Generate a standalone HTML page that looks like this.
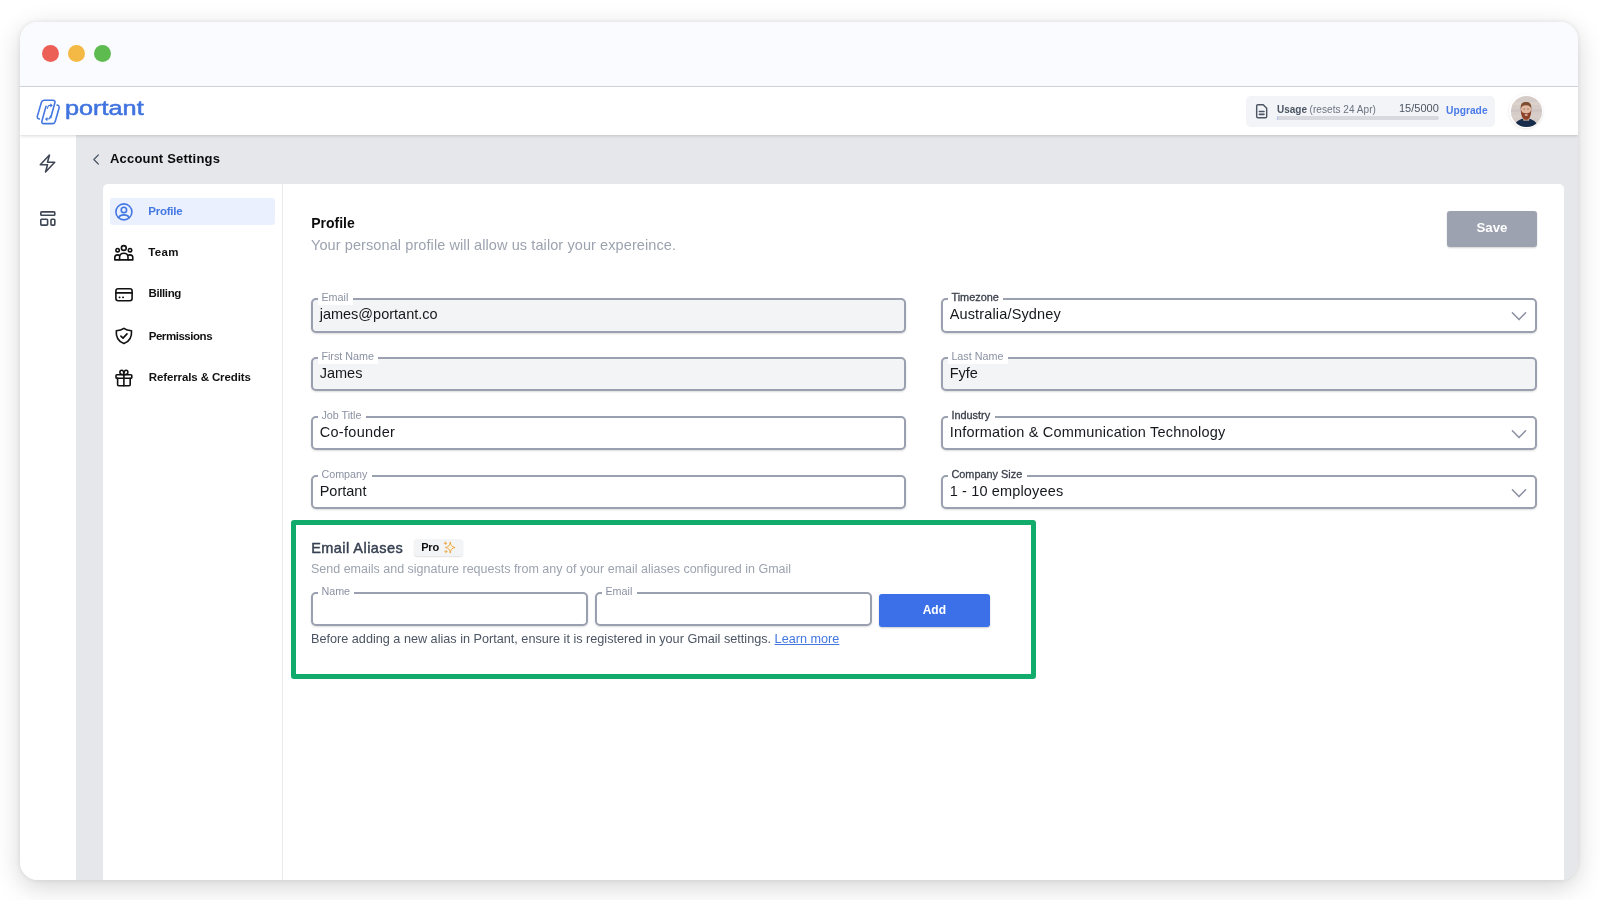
<!DOCTYPE html>
<html lang="en">
<head>
<meta charset="utf-8">
<title>Portant – Account Settings</title>
<style>
*{box-sizing:border-box;margin:0;padding:0}
html,body{width:1600px;height:900px;overflow:hidden;background:#fff;font-family:"Liberation Sans",sans-serif;color:#111;}
.shadow{position:absolute;left:20px;top:22px;width:1558px;height:858px;border-radius:18px;box-shadow:0 7px 26px rgba(0,0,0,.17),0 0 5px rgba(0,0,0,.09);}
.win{position:absolute;left:0;top:0;width:1600px;height:900px;clip-path:inset(22px 22px 20px 20px round 18px);background:#fff;will-change:transform;}
.abs,.win *{position:absolute}
.t{white-space:nowrap;line-height:1}
.titlebar{left:20px;top:22px;width:1558px;height:65px;background:#fafbfe;border-bottom:1px solid #d4d7dc;}
.dot{top:45px;width:17px;height:17px;border-radius:50%}
.header{left:20px;top:87px;width:1558px;height:48px;background:#fff;box-shadow:0 1px 3px rgba(0,0,0,.16)}
.main{left:76px;top:135px;width:1502px;height:745px;background:#e5e7eb;}
.card{left:103px;top:184px;width:1461px;height:700px;background:#fff;border-radius:5px 5px 0 0;}
.vline{left:282px;top:184px;width:1px;height:700px;background:#e8eaed}
.item{left:110px;width:165px;height:28px;border-radius:3px}
.nt{left:148px;font-size:11.5px;font-weight:bold;color:#111}
.field{height:36px;border:2px solid #9ba0b0;border-radius:5px;background:#fff;box-shadow:0 1px 2px rgba(0,0,0,.14)}
.field.dis{background:#f3f4f6}
.lab{font-size:10.5px;color:#8a91a2;background:#fff;line-height:12px;height:12px;padding:0 5px 0 4px;white-space:nowrap}
.lab.dis{background:linear-gradient(#fff 0,#fff 7px,#f3f4f6 7px)}
.lab.dk{color:#3a3f4a}
.val{font-size:14.5px;color:#16181d;white-space:nowrap;line-height:1}
</style>
</head>
<body>
<div class="shadow"></div>
<div class="win">
  <div class="titlebar"></div>
  <div class="dot" style="left:42px;background:#ec5f57"></div>
  <div class="dot" style="left:68px;background:#f4b844"></div>
  <div class="dot" style="left:94px;background:#5dbb50"></div>
  <div class="main"></div>
  <div class="header"></div>
  <svg style="left:33px;top:95.6px" width="32.6" height="32.6" viewBox="0 0 32 32" fill="none" stroke="#4377e2" stroke-width="1.55" stroke-linecap="round" stroke-linejoin="round">
<path d="M6.2 22.6 C4.6 22.2 3.9 21.3 4.3 19.8 L8.2 6.3 C8.6 4.9 9.4 4.2 10.9 4.2 L19.6 4.2 C21.2 4.2 21.9 5.2 21.5 6.6 L17.4 21.4"/>
<path d="M23.6 8.9 C25.4 9.3 26 10.3 25.6 11.8 L21.8 25 C21.4 26.4 20.6 27.1 19.1 27.1 L10.6 27.1 C9 27.1 8.3 26.1 8.7 24.7 L12.8 10"/>
<path d="M14.2 12.2 L14.7 10.4 C14.9 9.6 15.4 9.2 16.2 9.2 L18.6 9.2 M17.4 8 L18.7 9.2 L17.4 10.4" stroke-width="1.1"/>
<path d="M17 19.6 L16.5 21.4 C16.3 22.2 15.8 22.6 15 22.6 L12.6 22.6 M13.8 21.4 L12.5 22.6 L13.8 23.8" stroke-width="1.1"/>
</svg>
<div class="t " style="left:64.7px;top:96.7px;font-size:21px;color:#3f73e0;-webkit-text-stroke:.55px #3f73e0;transform:scaleX(1.203);transform-origin:0 0;">portant</div>
<div style="left:1246px;top:95.5px;width:249px;height:31px;background:#f3f4f7;border-radius:5px"></div>
<svg style="left:1252.600px;top:101.800px" width="18.4" height="18.4" viewBox="0 0 18 18" fill="none" stroke="#4b5563" stroke-width="1.4" stroke-linecap="round" stroke-linejoin="round">
<path d="M4.8 2.7 H10 L13.4 6.1 V14.2 C13.4 14.9 12.9 15.4 12.2 15.4 H4.8 C4.1 15.4 3.6 14.9 3.6 14.2 V3.9 C3.6 3.2 4.1 2.7 4.8 2.7 Z"/>
<path d="M6.2 9.3 H10.8 M6.2 12.1 H10.8" stroke-width="1.5"/>
</svg>
<div class="t " style="left:1277.0px;top:104.5px;font-size:10px;font-weight:bold;color:#4b5563;">Usage</div>
<div class="t " style="left:1309.6px;top:104.5px;font-size:10px;color:#6b7280;letter-spacing:.05px;">(resets 24 Apr)</div>
<div class="t " style="left:1399.0px;top:102.9px;font-size:11px;color:#4b5563;">15/5000</div>
<div style="left:1277px;top:116.4px;width:161.5px;height:3.2px;border-radius:2px;background:#d7d9df"></div>
<div style="left:1277px;top:116.4px;width:1.2px;height:3.2px;border-radius:1px;background:#b4c4ee"></div>
<div class="t " style="left:1446.0px;top:106.3px;font-size:10.25px;font-weight:bold;color:#4a7be8;">Upgrade</div>
<div style="left:1509px;top:94px;width:34px;height:34px;border-radius:50%;background:#fff;box-shadow:0 1px 3px rgba(0,0,0,.10)"></div>
<svg style="left:1510.5px;top:95.5px" width="31" height="31" viewBox="0 0 31 31">
<defs><clipPath id="avc"><circle cx="15.5" cy="15.5" r="15.5"/></clipPath><filter id="avb" x="-20%" y="-20%" width="140%" height="140%"><feGaussianBlur stdDeviation="0.7"/></filter></defs>
<g clip-path="url(#avc)"><rect width="31" height="31" fill="#d5ccc8"/>
<g filter="url(#avb)">
<rect x="0" y="6" width="31" height="3" fill="#ddd2cb"/><rect x="0" y="13" width="31" height="3" fill="#cfc6c3"/><rect x="0" y="19" width="31" height="3" fill="#d9cfca"/>
<ellipse cx="15" cy="31.5" rx="11.8" ry="9.3" fill="#15294a"/>
<rect x="12.2" y="19" width="6" height="5.6" fill="#d9b39f"/>
<ellipse cx="15" cy="13.6" rx="5" ry="6.4" fill="#e2b9a3"/>
<path d="M9.7 13.5 C9.2 7 11.800 5.900 15 5.900 C18.400 5.900 20.900 7.200 20.300 13.500 C19.700 10.400 18.300 9.300 15 9.300 C11.800 9.300 10.400 10.400 9.700 13.500 Z" fill="#7d4e31"/>
<path d="M9.800 12.500 C9.800 20.500 12 23.800 15.200 23.800 C18.400 23.800 20.300 20.500 20.300 12.500 C19.800 16.500 18.200 17.300 15.200 17.300 C12.200 17.300 10.400 16.500 9.800 12.500 Z" fill="#8c4227"/>
<ellipse cx="15.200" cy="19" rx="1.700" ry=".75" fill="#f1ded4"/>
<ellipse cx="13.200" cy="13" rx=".8" ry=".55" fill="#5d4238" opacity=".75"/><ellipse cx="17" cy="13" rx=".8" ry=".55" fill="#5d4238" opacity=".75"/>
</g></g></svg>
  <svg style="left:37.3px;top:152.5px" width="21" height="21" viewBox="0 0 24 24" fill="none" stroke="#3f4654" stroke-width="1.8" stroke-linecap="round" stroke-linejoin="round"><path d="M3.75 13.5l10.5-11.25L12 10.5h8.25L9.75 21.75 12 13.5H3.750z"/></svg>
<svg style="left:38px;top:209px" width="20" height="20" viewBox="0 0 20 20" fill="none" stroke="#3f4654" stroke-width="1.6" stroke-linejoin="round"><rect x="2.8" y="2.9" width="14" height="3.3" rx="0.8"/><rect x="2.8" y="10.3" width="6.8" height="5.8" rx="0.8"/><rect x="13" y="10.3" width="3.8" height="5.8" rx="0.8"/></svg>
  <svg style="left:90px;top:152px" width="12" height="14" viewBox="0 0 12 14" fill="none" stroke="#4b5563" stroke-width="1.2" stroke-linecap="round" stroke-linejoin="round"><path d="M8.3 3 L3.8 7.5 L8.3 12"/></svg>
<div class="t " style="left:110.0px;top:152.1px;font-size:13px;font-weight:bold;color:#0b0b0c;letter-spacing:.2px;">Account Settings</div>
  <div class="card"></div>
  <div class="vline"></div>
  <div class="item" style="top:198px;height:27.4px;background:#eaf0fd"></div>
<svg style="left:113px;top:200.5px" width="22" height="22" viewBox="0 0 22 22" fill="none" stroke="#4377e2" stroke-width="1.6" stroke-linecap="round"><circle cx="10.9" cy="10.9" r="8"/><circle cx="10.9" cy="8.9" r="2.7"/><path d="M5.6 16.6 C6.6 14.6 8.5 13.9 10.9 13.9 C13.3 13.9 15.2 14.6 16.2 16.6"/></svg>
<div class="t " style="left:148.3px;top:205.9px;font-size:11.5px;font-weight:bold;color:#4377e2;letter-spacing:-.24px;">Profile</div>
<svg style="left:112px;top:242px" width="24" height="22" viewBox="0 0 24 22" fill="none" stroke="#111" stroke-width="1.6" stroke-linejoin="round"><circle cx="11.8" cy="6" r="2.4"/><circle cx="5.6" cy="8.2" r="1.7"/><circle cx="18" cy="8.2" r="1.7"/><path d="M7.6 17.9 V15.2 C7.6 12.8 9.3 11.3 11.8 11.3 C14.3 11.3 16 12.8 16 15.2 V17.9 Z"/><path d="M7.6 17.9 H2.8 V15.6 C2.8 13.9 3.9 12.9 5.6 12.9 C6.5 12.9 7.2 13.1 7.7 13.6"/><path d="M16 17.9 H20.8 V15.6 C20.8 13.9 19.7 12.9 18 12.9 C17.1 12.9 16.4 13.1 15.9 13.6"/></svg>
<div class="t " style="left:148.3px;top:246.7px;font-size:11.5px;font-weight:bold;color:#111;letter-spacing:.3px;">Team</div>
<svg style="left:113px;top:284px" width="22" height="22" viewBox="0 0 22 22" fill="none" stroke="#111" stroke-width="1.6" stroke-linecap="round" stroke-linejoin="round"><rect x="2.9" y="4.8" width="16.2" height="12" rx="2.2"/><path d="M2.9 8.9 H19.1" stroke-width="1.8"/><path d="M6.4 13.3 H6.7 M9.9 13.3 H10.2" stroke-width="1.7"/></svg>
<div class="t " style="left:148.5px;top:288.0px;font-size:11.5px;font-weight:bold;color:#111;letter-spacing:-.38px;">Billing</div>
<svg style="left:113px;top:325px" width="22" height="22" viewBox="0 0 22 22" fill="none" stroke="#111" stroke-width="1.6" stroke-linecap="round" stroke-linejoin="round"><path d="M10.9 3.3 C8.9 4.9 6.4 5.6 3.3 5.7 C2.8 11.6 5.2 16.4 10.9 18.6 C16.6 16.4 19 11.600 18.5 5.7 C15.4 5.6 12.9 4.9 10.9 3.3 Z"/><path d="M7.9 11.1 L10 13.1 L14 8.900"/></svg>
<div class="t " style="left:148.7px;top:330.6px;font-size:11.5px;font-weight:bold;color:#111;letter-spacing:-.45px;">Permissions</div>
<svg style="left:113px;top:366.5px" width="22" height="22" viewBox="0 0 22 22" fill="none" stroke="#111" stroke-width="1.6" stroke-linecap="round" stroke-linejoin="round"><rect x="3" y="7.7" width="15.800" height="3.6" rx="0.9"/><path d="M4.6 11.3 V17.6 C4.6 18.3 5 18.700 5.7 18.700 H16.1 C16.8 18.700 17.2 18.3 17.2 17.600 V11.3"/><path d="M10.9 7.7 V18.700"/><path d="M10.9 7.600 C8.9 7.600 6.900 7 6.900 5.200 C6.900 3.900 7.800 3.200 8.700 3.200 C10.200 3.200 10.9 5.200 10.9 7.600 Z M10.9 7.600 C12.9 7.600 14.900 7 14.900 5.200 C14.900 3.900 14 3.200 13.100 3.200 C11.600 3.200 10.9 5.200 10.9 7.600 Z"/></svg>
<div class="t " style="left:148.7px;top:372.1px;font-size:11.5px;font-weight:bold;color:#111;letter-spacing:-.11px;">Referrals &amp; Credits</div>
  <div class="t " style="left:311.2px;top:216.1px;font-size:14px;font-weight:bold;color:#0b0b0c;">Profile</div>
<div class="t " style="left:311.0px;top:237.7px;font-size:14.5px;color:#9ca3af;letter-spacing:.09px;">Your personal profile will allow us tailor your expereince.</div>
<div style="left:1447px;top:211px;width:89.5px;height:36px;border-radius:3px;background:#9ca2b0;box-shadow:0 1px 2px rgba(0,0,0,.18)"></div>
<div class="t " style="left:1476.4px;top:221.4px;font-size:13.3px;font-weight:bold;color:#fff;">Save</div>
<div class="field dis" style="left:311px;top:298px;width:595px;height:35px"></div>
<div class="t" style="left:318px;top:292px;height:12.7px;background:#fff;padding:0 4.4px 0 3.4px;font-size:10.75px;line-height:10.15px;color:#8a91a2">Email</div>
<div class="t " style="left:319.7px;top:307.3px;font-size:14.5px;color:#16181d;">james@portant.co</div>
<div class="field dis" style="left:311px;top:357px;width:595px;height:34px"></div>
<div class="t" style="left:318px;top:351px;height:12.7px;background:#fff;padding:0 4.4px 0 3.4px;font-size:10.75px;line-height:10.15px;color:#8a91a2">First Name</div>
<div class="t " style="left:319.7px;top:366.3px;font-size:14.5px;color:#16181d;">James</div>
<div class="field" style="left:311px;top:416px;width:595px;height:34px"></div>
<div class="t" style="left:318px;top:410px;height:12.7px;background:#fff;padding:0 4.4px 0 3.4px;font-size:10.75px;line-height:10.15px;color:#8a91a2">Job Title</div>
<div class="t " style="left:319.7px;top:425.3px;font-size:14.5px;color:#16181d;letter-spacing:0.3px;">Co-founder</div>
<div class="field" style="left:311px;top:475px;width:595px;height:34px"></div>
<div class="t" style="left:318px;top:469px;height:12.7px;background:#fff;padding:0 4.4px 0 3.4px;font-size:10.75px;line-height:10.15px;color:#8a91a2">Company</div>
<div class="t " style="left:319.7px;top:484.3px;font-size:14.5px;color:#16181d;">Portant</div>
<div class="field" style="left:941px;top:298px;width:595.5px;height:35px"></div>
<div class="t" style="left:948px;top:292px;height:12.7px;background:#fff;padding:0 4.4px 0 3.4px;font-size:10.75px;line-height:10.15px;-webkit-text-stroke:.3px #3a3f4a;font-size:10.9px;color:#3a3f4a">Timezone</div>
<div class="t " style="left:949.7px;top:307.3px;font-size:14.5px;color:#16181d;letter-spacing:0.15px;">Australia/Sydney</div>
<svg style="left:1510.0px;top:309.8px" width="18" height="12" viewBox="0 0 18 12" fill="none" stroke="#8a8fa0" stroke-width="1.5" stroke-linecap="round" stroke-linejoin="round"><path d="M2.400 2.800 L9 9.600 L15.600 2.800"/></svg>
<div class="field dis" style="left:941px;top:357px;width:595.5px;height:34px"></div>
<div class="t" style="left:948px;top:351px;height:12.7px;background:#fff;padding:0 4.4px 0 3.4px;font-size:10.75px;line-height:10.15px;color:#8a91a2">Last Name</div>
<div class="t " style="left:949.7px;top:366.3px;font-size:14.5px;color:#16181d;">Fyfe</div>
<div class="field" style="left:941px;top:416px;width:595.5px;height:34px"></div>
<div class="t" style="left:948px;top:410px;height:12.7px;background:#fff;padding:0 4.4px 0 3.4px;font-size:10.75px;line-height:10.15px;-webkit-text-stroke:.3px #3a3f4a;font-size:10.9px;color:#3a3f4a">Industry</div>
<div class="t " style="left:949.7px;top:425.3px;font-size:14.5px;color:#16181d;letter-spacing:0.2px;">Information &amp; Communication Technology</div>
<svg style="left:1510.0px;top:427.8px" width="18" height="12" viewBox="0 0 18 12" fill="none" stroke="#8a8fa0" stroke-width="1.5" stroke-linecap="round" stroke-linejoin="round"><path d="M2.400 2.800 L9 9.600 L15.600 2.800"/></svg>
<div class="field" style="left:941px;top:475px;width:595.5px;height:34px"></div>
<div class="t" style="left:948px;top:469px;height:12.7px;background:#fff;padding:0 4.4px 0 3.4px;font-size:10.75px;line-height:10.15px;-webkit-text-stroke:.3px #3a3f4a;font-size:10.9px;color:#3a3f4a">Company Size</div>
<div class="t " style="left:949.7px;top:484.3px;font-size:14.5px;color:#16181d;letter-spacing:0.15px;">1 - 10 employees</div>
<svg style="left:1510.0px;top:486.8px" width="18" height="12" viewBox="0 0 18 12" fill="none" stroke="#8a8fa0" stroke-width="1.5" stroke-linecap="round" stroke-linejoin="round"><path d="M2.400 2.800 L9 9.600 L15.600 2.800"/></svg>
  <div style="left:291px;top:520px;width:745px;height:159px;border:5px solid #11ab6c;border-radius:3px"></div>
<div class="t " style="left:311.2px;top:540.7px;font-size:14.5px;color:#374151;-webkit-text-stroke:.45px #374151;letter-spacing:.45px;">Email Aliases</div>
<div style="left:414px;top:539px;width:49px;height:17px;border-radius:3px;background:#f3f4f6;box-shadow:0 1px 1.5px rgba(0,0,0,.12)"></div>
<div class="t " style="left:421.2px;top:541.9px;font-size:11px;font-weight:bold;color:#111;letter-spacing:-.2px;">Pro</div>
<svg style="left:443px;top:540px" width="14" height="15" viewBox="0 0 14 15" fill="none" stroke="#eaa540" stroke-width=".95" stroke-linejoin="round"><path d="M7.25 1.900 C7.600 5.400 8.700 6.900 12.100 7.500 C8.700 8.100 7.600 9.600 7.250 13.100 C6.900 9.600 5.800 8.100 2.400 7.500 C5.800 6.900 6.900 5.400 7.250 1.900 Z" fill="#fbf3e4"/><path d="M2.500 1.600 C2.650 2.800 2.950 3.100 4.100 3.250 C2.950 3.400 2.650 3.700 2.500 4.900 C2.350 3.700 2.050 3.400 0.900 3.250 C2.050 3.100 2.350 2.800 2.500 1.600 Z M3 9.900 C3.150 11.100 3.450 11.400 4.600 11.550 C3.450 11.700 3.150 12 3 13.200 C2.850 12 2.550 11.700 1.400 11.550 C2.550 11.400 2.850 11.100 3 9.900 Z" fill="#eaa540" stroke-width=".45"/></svg>
<div class="t " style="left:311.0px;top:563.4px;font-size:12.5px;color:#9ca3af;">Send emails and signature requests from any of your email aliases configured in Gmail</div>
<div class="field" style="left:311px;top:592px;width:276.5px;height:34px"></div>
<div class="t" style="left:318px;top:586px;height:12.7px;background:#fff;padding:0 4.4px 0 3.4px;font-size:10.75px;line-height:10.15px;color:#8a91a2">Name</div>
<div class="field" style="left:595px;top:592px;width:277px;height:34px"></div>
<div class="t" style="left:602px;top:586px;height:12.7px;background:#fff;padding:0 4.4px 0 3.4px;font-size:10.75px;line-height:10.15px;color:#8a91a2">Email</div>
<div style="left:879px;top:594px;width:110.5px;height:32.5px;border-radius:3px;background:#3b70e8;box-shadow:0 1px 2px rgba(0,0,0,.2)"></div>
<div class="t " style="left:922.7px;top:604.0px;font-size:12px;font-weight:bold;color:#fff;">Add</div>
<div class="t " style="left:311.0px;top:632.7px;font-size:12.67px;color:#4b5563;">Before adding a new alias in Portant, ensure it is registered in your Gmail settings. <span style="position:static;color:#4377e2;text-decoration:underline">Learn more</span></div>
</div>
</body>
</html>
